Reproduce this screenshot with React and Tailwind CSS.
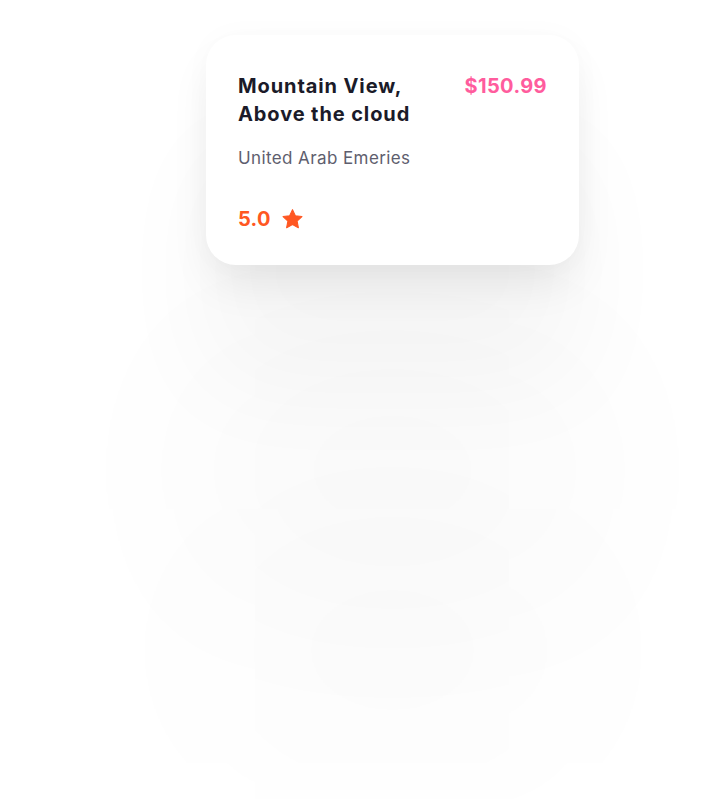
import React from 'react';

const Star = () => (
  <svg width="23" height="22" viewBox="0 0 24 24" className="fill-[#ff5722]">
    <path d="M12 1.8l3.1 6.6 7.2.9-5.3 5 1.4 7.2L12 18l-6.4 3.5L7 14.3l-5.3-5 7.2-.9z" strokeLinejoin="round" stroke="#ff5722" strokeWidth="1.2" />
  </svg>
);

const App = () => {
  return (
    <div className="min-h-[799px] bg-white overflow-hidden font-['Inter',sans-serif]">
      {/* Listing card */}
      <div className="ml-[206px] mt-[35px] w-[373px] rounded-[30px] bg-white px-8 pt-[37px] pb-8 shadow-[0_0_30px_rgba(0,0,0,0.025),0_24px_44px_-6px_rgba(0,0,0,0.08),0_120px_110px_0_rgba(0,0,0,0.035),0_320px_200px_10px_rgba(0,0,0,0.028),0_500px_220px_0_rgba(0,0,0,0.018)]">
        <div className="flex items-start justify-between">
          <h2 className="text-[20px] leading-[28px] font-bold text-[#1b1b29] tracking-[0.9px]">
            Mountain View,
            <br />
            Above the cloud
          </h2>
          <span className="text-[20px] leading-[28px] font-bold text-[#ff5c9d] tracking-[0.4px]">$150.99</span>
        </div>
        <p className="mt-[18px] text-[17px] leading-[24px] text-[#5e5e6e] tracking-[0.4px]">United Arab Emeries</p>
        <div className="mt-[35px] flex items-center gap-[10px]">
          <span className="text-[20px] leading-[28px] font-bold text-[#ff5722] tracking-[0.3px]">5.0</span>
          <Star />
        </div>
      </div>
    </div>
  );
};

export default App;
